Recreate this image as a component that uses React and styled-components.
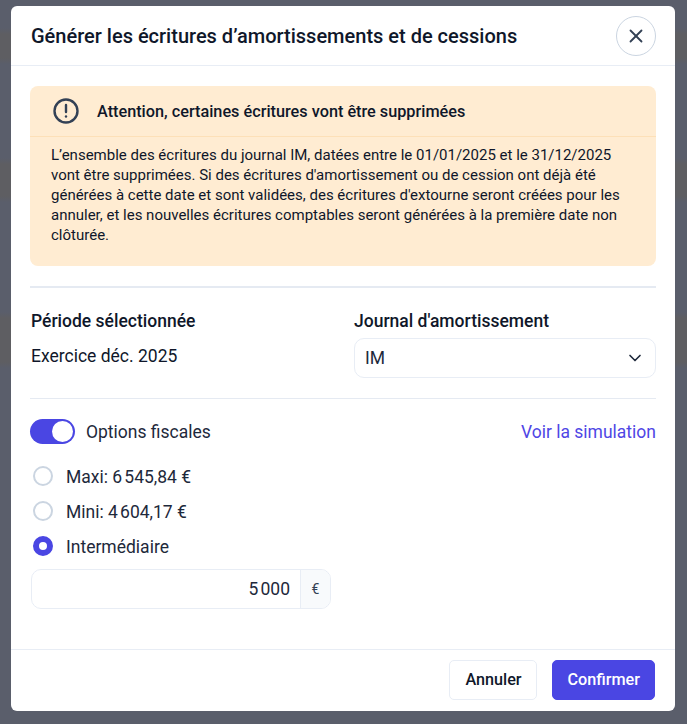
import React from "react";
import styled, { createGlobalStyle } from "styled-components";
import { ChevronDown, X } from "lucide-react";

const GlobalStyle = createGlobalStyle`
  html, body {
    margin: 0;
    padding: 0;
    height: 100%;
  }
  body {
    font-family: Roboto, "Liberation Sans", sans-serif;
    color: #0f172a;
  }
`;

const Backdrop = styled.div`
  box-sizing: border-box;
  height: 724px;
  padding: 6px 12px 13px 11px;
  overflow: hidden;
  background: linear-gradient(
    to bottom,
    #5a5e6b 0 28px,
    #5e5e62 34px 58px,
    #5a5e6b 64px 158px,
    #5e5e62 164px 196px,
    #5a5e6b 202px 312px,
    #5e5e62 318px 362px,
    #5a5e6b 368px
  );
`;

const Modal = styled.div`
  display: flex;
  flex-direction: column;
  height: 705px;
  background: #fff;
  border-radius: 6px;
  overflow: hidden;
`;

const Header = styled.header`
  display: flex;
  align-items: center;
  justify-content: space-between;
  box-sizing: border-box;
  height: 60px;
  padding: 0 19px 0 20px;
  border-bottom: 1px solid #e8edf5;
`;

const Title = styled.h1`
  margin: 0;
  font-size: 20px;
  font-weight: 500;
  line-height: 28px;
`;

const CloseButton = styled.button`
  display: flex;
  align-items: center;
  justify-content: center;
  width: 40px;
  height: 40px;
  padding: 0;
  background: #fff;
  border: 1px solid #cbd5e1;
  border-radius: 50%;
  color: #334155;
`;

const Body = styled.div`
  flex: 1;
  padding: 20px 19px 0;
`;

const Alert = styled.div`
  background: #ffecd2;
  border-radius: 8px;
`;

const AlertHead = styled.div`
  display: flex;
  align-items: center;
  gap: 17px;
  height: 50px;
  padding: 0 22px;
  border-bottom: 1px solid #fde0b8;
  font-size: 16.25px;
  font-weight: 500;
`;

const AlertText = styled.p`
  margin: 0;
  padding: 8px 28px 21px 21px;
  font-size: 15px;
  line-height: 20px;
`;

const Rule = styled.hr`
  margin: ${(p) => p.$margin};
  border: 0;
  height: ${(p) => p.$thick}px;
  background: #e5eaf2;
`;

const Columns = styled.div`
  display: grid;
  grid-template-columns: 323px 1fr;
  padding-left: 1px;
`;

const Label = styled.div`
  padding-top: 1px;
  font-size: 17.5px;
  font-weight: 500;
  line-height: 24px;
  margin-bottom: ${(p) => p.$gap}px;
`;

const Value = styled.div`
  font-size: 17.5px;
  line-height: 24px;
`;

const Select = styled.div`
  display: flex;
  align-items: center;
  justify-content: space-between;
  box-sizing: border-box;
  height: 40px;
  padding: 0 10px;
  border: 1px solid #e8edf5;
  border-radius: 10px;
  font-size: 17.5px;
  color: #1e293b;
`;

const OptionsRow = styled.div`
  display: flex;
  align-items: center;
  justify-content: space-between;
  height: 26px;
  margin-top: -1px;
`;

const ToggleLabel = styled.div`
  display: flex;
  align-items: center;
  gap: 11px;
  font-size: 17.5px;
  color: #1e293b;
`;

const Caption = styled.span`
  padding-top: 2px;
`;

const Toggle = styled.div`
  position: relative;
  width: 45px;
  height: 25px;
  background: #4a46e3;
  border-radius: 13px;

  &::after {
    content: "";
    position: absolute;
    top: 2px;
    right: 2px;
    width: 21px;
    height: 21px;
    background: #fff;
    border-radius: 50%;
  }
`;

const Link = styled.a`
  padding-top: 2px;
  font-size: 17.5px;
  color: #4f46e5;
`;

const RadioList = styled.div`
  display: flex;
  flex-direction: column;
  gap: 15px;
  margin: 22px 0 0 3px;
`;

const RadioRow = styled.label`
  display: flex;
  align-items: center;
  gap: 13px;
  height: 20px;
  font-size: 17.5px;
  color: #1e293b;
`;

const Radio = styled.span`
  box-sizing: border-box;
  width: 20px;
  height: 20px;
  border-radius: 50%;
  background: #fff;
  border: ${(p) => (p.$checked ? "6px solid #4a46e3" : "2px solid #cbd5e1")};
`;

const AmountField = styled.div`
  display: flex;
  box-sizing: border-box;
  width: 300px;
  height: 40px;
  margin: 13px 0 0 1px;
  border: 1px solid #e8edf5;
  border-radius: 10px;
  overflow: hidden;
`;

const AmountValue = styled.div`
  flex: 1;
  display: flex;
  align-items: center;
  justify-content: flex-end;
  padding: 0 10px;
  font-size: 17.5px;
  color: #1e293b;
`;

const AmountUnit = styled.div`
  display: flex;
  align-items: center;
  justify-content: center;
  width: 29px;
  background: #f8fafc;
  border-left: 1px solid #e8edf5;
  font-size: 14px;
  color: #334155;
`;

const Footer = styled.footer`
  display: flex;
  justify-content: flex-end;
  gap: 15px;
  box-sizing: border-box;
  height: 62px;
  padding: 10px 20px 0;
  border-top: 1px solid #e8edf5;
`;

const Button = styled.button`
  box-sizing: border-box;
  height: 40px;
  padding: 0 14px 2px 15px;
  border-radius: 5px;
  border: 1px solid ${(p) => (p.$primary ? "#4a46e3" : "#e8edf5")};
  background: ${(p) => (p.$primary ? "#4a46e3" : "#fff")};
  color: ${(p) => (p.$primary ? "#fff" : "#0f172a")};
  font-family: inherit;
  font-size: 16.2px;
  font-weight: 500;
`;

const AlertIcon = () => (
  <svg width="28" height="28" viewBox="0 0 28 28" fill="none" stroke="#334155" strokeWidth="2.4" strokeLinecap="round">
    <circle cx="14" cy="14" r="11.5" />
    <path d="M14 8v7" />
    <path d="M14 19.4v.1" />
  </svg>
);

export default function App() {
  return (
    <Backdrop>
      <GlobalStyle />
      <Modal>
        <Header>
          <Title>Générer les écritures d’amortissements et de cessions</Title>
          <CloseButton aria-label="Fermer">
            <X size={22} strokeWidth={2} />
          </CloseButton>
        </Header>
        <Body>
          <Alert>
            <AlertHead>
              <AlertIcon />
              Attention, certaines écritures vont être supprimées
            </AlertHead>
            <AlertText>
              L’ensemble des écritures du journal IM, datées entre le 01/01/2025 et le 31/12/2025 vont être supprimées. Si des écritures d'amortissement ou de cession ont déjà été générées à cette date et sont validées, des écritures d'extourne seront créées pour les annuler, et les nouvelles écritures comptables seront générées à la première date non clôturée.
            </AlertText>
          </Alert>
          <Rule $thick={2} $margin="20px 0" />
          <Columns>
            <div>
              <Label $gap={11}>Période sélectionnée</Label>
              <Value>Exercice déc. 2025</Value>
            </div>
            <div>
              <Label $gap={5}>Journal d'amortissement</Label>
              <Select>
                IM
                <ChevronDown size={20} strokeWidth={2} />
              </Select>
            </div>
          </Columns>
          <Rule $thick={1} $margin="20px 0" />
          <OptionsRow>
            <ToggleLabel>
              <Toggle />
              <Caption>Options fiscales</Caption>
            </ToggleLabel>
            <Link>Voir la simulation</Link>
          </OptionsRow>
          <RadioList>
            <RadioRow><Radio /><Caption>Maxi: 6{"\u202F"}545,84 €</Caption></RadioRow>
            <RadioRow><Radio /><Caption>Mini: 4{"\u202F"}604,17 €</Caption></RadioRow>
            <RadioRow><Radio $checked /><Caption>Intermédiaire</Caption></RadioRow>
          </RadioList>
          <AmountField>
            <AmountValue>5{"\u202F"}000</AmountValue>
            <AmountUnit>€</AmountUnit>
          </AmountField>
        </Body>
        <Footer>
          <Button>Annuler</Button>
          <Button $primary>Confirmer</Button>
        </Footer>
      </Modal>
    </Backdrop>
  );
}
